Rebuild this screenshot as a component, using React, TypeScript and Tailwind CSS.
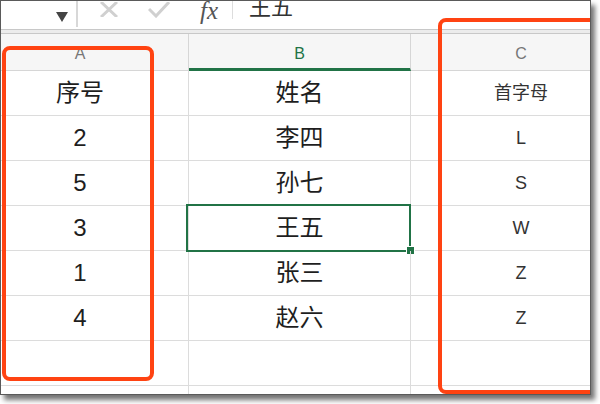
import React from "react";

const rows: [string, string, string][] = [
  ["序号", "姓名", "首字母"],
  ["2", "李四", "L"],
  ["5", "孙七", "S"],
  ["3", "王五", "W"],
  ["1", "张三", "Z"],
  ["4", "赵六", "Z"],
  ["", "", ""],
  ["", "", ""],
];

const font = "font-['Liberation_Sans','Noto_Sans_CJK_SC',sans-serif]";

function FormulaBar() {
  return (
    <div className="flex h-[28px] items-start bg-white">
      <div className="flex h-[26px] w-[75px] items-start justify-end pr-[8px]">
        <svg width="12" height="10" viewBox="0 0 12 10" className="mt-[11px]">
          <path d="M0 0h12L6 10z" fill="#444" />
        </svg>
      </div>
      <div className="h-[26px] w-[2px] bg-[#d8d8d8]" />
      <div className="flex items-start gap-[30px] pl-[22px] pt-[1px]">
        <svg width="18" height="15" viewBox="0 0 18 15">
          <path d="M1 0l16 15M17 0L1 15" stroke="#d0d0d0" strokeWidth="3" />
        </svg>
        <svg width="22" height="16" viewBox="0 0 22 16">
          <path d="M1 7l7 7L21 0" stroke="#d0d0d0" strokeWidth="3" fill="none" />
        </svg>
      </div>
      <span className="-mt-[4px] ml-[30px] font-['Liberation_Serif',serif] text-[25px] italic leading-[28px] text-[#555]">
        fx
      </span>
      <div className="ml-[14px] h-[18px] w-[1px] bg-[#ddd]" />
      <span className={`${font} -mt-[10px] ml-[16px] text-[22px] text-[#333]`}>王五</span>
    </div>
  );
}

export default function App() {
  return (
    <div className="relative h-[404px] w-[600px] overflow-hidden bg-white">
      <div className="relative h-[395px] w-[591px] overflow-hidden border border-[#5a5a5a] bg-white shadow-[4px_5px_5px_rgba(0,0,0,0.55)]">
        <FormulaBar />
        <div className="h-[5px] border-y border-[#c8c8c8] bg-[#ececec]" />
        <div className={`${font} -ml-[29px] grid w-[660px] grid-cols-[217px_222px_221px]`}>
          <div className="flex h-[37px] items-center justify-center border-b border-r border-[#d6d6d6] bg-[#f6f6f6] pt-[4px] text-[16px] text-[#777]">
            A
          </div>
          <div className="flex h-[37px] items-center justify-center border-b-[3px] border-r border-[#d6d6d6] border-b-[#217346] bg-[#f6f6f6] pt-[6px] text-[16px] text-[#217346]">
            B
          </div>
          <div className="flex h-[37px] items-center justify-center border-b border-r border-[#d6d6d6] bg-[#f6f6f6] pt-[4px] text-[16px] text-[#777]">
            C
          </div>
          {rows.map((r, i) => (
            <React.Fragment key={i}>
              <div className="flex h-[45px] items-center justify-center border-b border-r border-[#dcdcdc] text-[24px] text-[#1e1e1e]">
                {r[0]}
              </div>
              <div className="relative flex h-[45px] items-center justify-center border-b border-r border-[#dcdcdc] text-[24px] text-[#1e1e1e]">
                {r[1]}
                {i === 3 && (
                  <>
                    <div className="absolute -left-[3px] -top-[2px] h-[48px] w-[225px] border-2 border-[#217346]" />
                    <div className="absolute -bottom-[5px] -right-[5px] h-[9px] w-[9px] border border-white bg-[#217346]" />
                  </>
                )}
              </div>
              <div className="flex h-[45px] items-center justify-center border-b border-r border-[#dcdcdc] text-[18px] text-[#333]">
                {r[2]}
              </div>
            </React.Fragment>
          ))}
        </div>
        <div className="absolute left-[1px] top-[45px] h-[335px] w-[152px] rounded-[8px] border-4 border-[#ff4312]" />
        <div className="absolute left-[437px] top-[17px] h-[376px] w-[180px] rounded-[8px] border-4 border-[#ff4312]" />
      </div>
    </div>
  );
}
